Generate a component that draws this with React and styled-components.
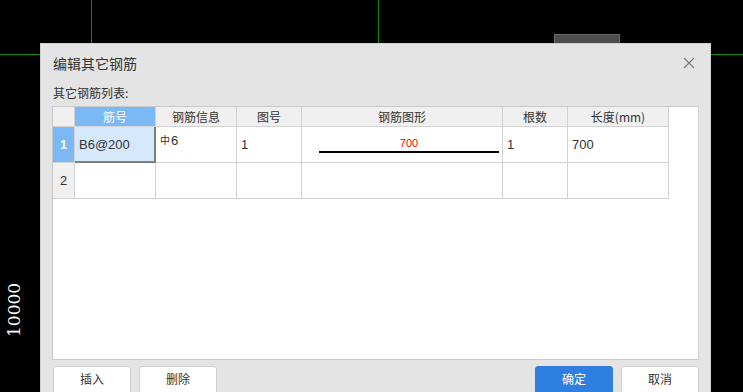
import React from 'react';
import styled, { createGlobalStyle } from 'styled-components';

const GlobalStyle = createGlobalStyle`
  html, body {
    margin: 0;
    padding: 0;
    background: #000;
    overflow: hidden;
  }
  body {
    font-family: "Noto Sans CJK SC", "Noto Sans", sans-serif;
  }
`;

// CAD canvas behind the dialog
const Canvas = styled.div`
  position: relative;
  width: 743px;
  height: 392px;
  background: #000;
  overflow: hidden;
`;

const VLine = styled.div`
  position: absolute;
  top: 0;
  left: ${(p) => p.x}px;
  width: 1px;
  height: ${(p) => p.h}px;
  background: #0a8a0a;
`;

const HLine = styled.div`
  position: absolute;
  top: ${(p) => p.y}px;
  left: ${(p) => p.x}px;
  width: ${(p) => p.w}px;
  height: 1px;
  background: #0a8a0a;
`;

const Block = styled.div`
  position: absolute;
  left: 554px;
  top: 34px;
  width: 66px;
  height: 12px;
  background: #4d4d4d;
  border: 1px solid #666;
  box-sizing: border-box;
`;

const DimText = styled.div`
  position: absolute;
  left: -6px;
  top: 307px;
  width: 40px;
  transform: rotate(-90deg);
  color: #fff;
  font-family: "DejaVu Serif", serif;
  font-size: 17px;
  line-height: 20px;
  text-align: center;
`;

// dialog window
const Dialog = styled.div`
  position: absolute;
  left: 40px;
  top: 43px;
  width: 671px;
  height: 370px;
  box-sizing: border-box;
  background: #e4e4e4;
  border: 1px solid #cfcfcf;
  display: flex;
  flex-direction: column;
  padding: 0 11px;
`;

const TitleBar = styled.div`
  height: 38px;
  display: flex;
  align-items: center;
  justify-content: space-between;
  padding: 0 2px 0 1px;
`;

const Title = styled.div`
  font-size: 14px;
  color: #333;
`;

const Close = styled.svg`
  width: 12px;
  height: 12px;
  margin-right: 2px;
`;

const Label = styled.div`
  font-size: 12px;
  color: #333;
  height: 24px;
  line-height: 22px;
  padding-left: 1px;
`;

const Panel = styled.div`
  height: 254px;
  box-sizing: border-box;
  background: #fff;
  border: 1px solid #c8c8c8;
  border-right-color: #d4d4d4;
`;

const Grid = styled.div`
  display: grid;
  grid-template-columns: 22px 81px 81px 65px 201px 65px 101px;
  grid-template-rows: 20px 36px 36px;
  width: 616px;
`;

const HeadCell = styled.div`
  box-sizing: border-box;
  border-right: 1px solid #d2d2d2;
  border-bottom: 1px solid #d2d2d2;
  background: ${(p) => (p.active ? '#7ab8f6' : '#f0f0f0')};
  color: ${(p) => (p.active ? '#fff' : '#333')};
  font-size: 12px;
  display: flex;
  align-items: center;
  justify-content: center;
`;

const RowHead = styled(HeadCell)`
  font-size: 13px;
  font-family: "Liberation Sans", "Noto Sans CJK SC", sans-serif;
  font-weight: ${(p) => (p.active ? 700 : 400)};
`;

const Cell = styled.div`
  box-sizing: border-box;
  border-right: ${(p) => (p.focus ? '2px solid #7d7d7d' : '1px solid #d2d2d2')};
  border-bottom: ${(p) => (p.focus ? '2px solid #7d7d7d' : '1px solid #d2d2d2')};
  background: ${(p) => (p.focus ? '#d5e8fc' : '#fff')};
  color: #333;
  font-size: 13px;
  font-family: "Liberation Sans", "Noto Sans CJK SC", sans-serif;
  display: flex;
  align-items: ${(p) => (p.top ? 'flex-start' : 'center')};
  padding: ${(p) => (p.top ? '6px 0 0 4px' : '0 0 0 4px')};
`;

const Steel = styled.span`
  font-family: "Noto Sans CJK SC", sans-serif;
  font-size: 10px;
  margin-right: 1px;
  position: relative;
  top: -1px;
`;

const ShapeCell = styled.div`
  box-sizing: border-box;
  border-right: 1px solid #d2d2d2;
  border-bottom: 1px solid #d2d2d2;
  display: flex;
  flex-direction: column;
  align-items: stretch;
  padding: 9px 3px 0 17px;
`;

const ShapeText = styled.div`
  color: #f00;
  font-size: 11px;
  font-family: "Liberation Sans", sans-serif;
  text-align: center;
  line-height: 14px;
`;

const ShapeBar = styled.div`
  height: 2px;
  background: #000;
  margin-top: 1px;
`;

const Footer = styled.div`
  display: flex;
  gap: 8px;
  padding: 6px 0 0 1px;
`;

const Button = styled.div`
  width: 78px;
  height: 28px;
  box-sizing: border-box;
  border: 1px solid ${(p) => (p.primary ? '#2f7fe0' : '#d0d0d0')};
  border-radius: 3px;
  background: ${(p) => (p.primary ? '#2f7fe0' : '#fff')};
  color: ${(p) => (p.primary ? '#fff' : '#333')};
  font-size: 12px;
  display: flex;
  align-items: center;
  justify-content: center;
  padding-bottom: 3px;
`;

const Spacer = styled.div`
  flex: 1;
`;

const headers = ['筋号', '钢筋信息', '图号', '钢筋图形', '根数', '长度(mm)'];

export default function App() {
  return (
    <>
      <GlobalStyle />
      <Canvas>
        <VLine x={91} h={43} />
        <VLine x={378} h={43} />
        <HLine x={0} y={54} w={40} />
        <HLine x={711} y={54} w={32} />
        <Block />
        <DimText>10000</DimText>

        <Dialog>
          <TitleBar>
            <Title>编辑其它钢筋</Title>
            <Close viewBox="0 0 12 12">
              <path d="M1 1 L11 11 M11 1 L1 11" stroke="#7a7a7a" strokeWidth="1.1" fill="none" />
            </Close>
          </TitleBar>
          <Label>其它钢筋列表:</Label>
          <Panel>
            <Grid>
              <HeadCell />
              {headers.map((h, i) => (
                <HeadCell key={h} active={i === 0}>{h}</HeadCell>
              ))}

              <RowHead active>1</RowHead>
              <Cell focus>B6@200</Cell>
              <Cell top><Steel>中</Steel>6</Cell>
              <Cell>1</Cell>
              <ShapeCell>
                <ShapeText>700</ShapeText>
                <ShapeBar />
              </ShapeCell>
              <Cell>1</Cell>
              <Cell>700</Cell>

              <RowHead>2</RowHead>
              <Cell />
              <Cell />
              <Cell />
              <Cell />
              <Cell />
              <Cell />
            </Grid>
          </Panel>
          <Footer>
            <Button>插入</Button>
            <Button>删除</Button>
            <Spacer />
            <Button primary>确定</Button>
            <Button>取消</Button>
          </Footer>
        </Dialog>
      </Canvas>
    </>
  );
}
